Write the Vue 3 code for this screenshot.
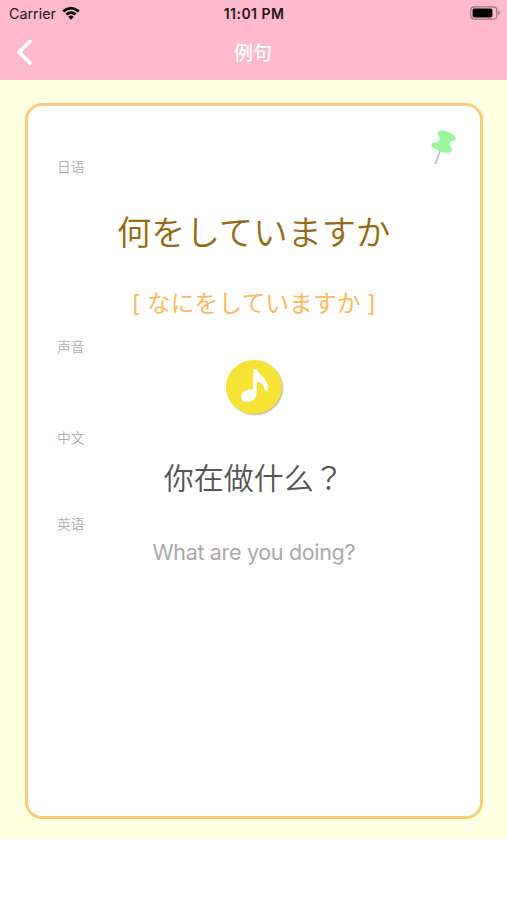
<script setup>
const sentence = {
  japanese: '何をしていますか',
  reading: '[ なにをしていますか ]',
  chinese: '你在做什么',
  english: 'What are you doing?',
}
</script>

<template>
  <div class="screen">
    <header class="header">
      <div class="status">
        <div class="carrier">
          <span>Carrier</span>
          <svg class="wifi" viewBox="0 0 18 14" width="18" height="14">
            <path d="M.3 4.3Q9-2.9 17.7 4.3L15.8 6.4Q9 .8 2.2 6.4Z" />
            <path d="M3.5 7.5Q9 2.9 14.5 7.5L12.7 9.5Q9 6.4 5.3 9.5Z" />
            <path d="M6.3 10.7Q9 8.5 11.7 10.7L9 13.7Z" />
          </svg>
        </div>
        <span class="time">11:01 PM</span>
        <svg class="battery" viewBox="0 0 31 14" width="31" height="14">
          <rect x=".8" y=".8" width="26" height="12.4" rx="3.5" fill="none" stroke="#a07580" stroke-width="1.2" />
          <rect x="2.6" y="2.5" width="19.8" height="9" rx="1.7" />
          <path d="M28.3 4.8Q32 7 28.3 9.2Z" fill="#a07580" />
        </svg>
      </div>
      <nav class="nav">
        <svg class="back" viewBox="0 0 18 28" width="18" height="28">
          <path d="M15 3.3L4 14.2L15 25" fill="none" stroke="#fff" stroke-width="3.6" stroke-linecap="round" />
        </svg>
        <h1>例句</h1>
        <span></span>
      </nav>
    </header>
    <main class="page">
      <article class="card">
        <svg class="pin" viewBox="0 0 28 36" width="28" height="36">
          <path d="M10.2 21L5.2 33.8" fill="none" stroke="#c4c4c4" stroke-width="2" />
          <path
            d="M7.9 2.3C8.6-.1 17 .6 21.4 3.5C25 5.6 26.6 8.5 25.4 9.9C23.8 11.4 21.8 10.2 20.8 11.4C19.6 12.7 19 14.2 19.8 15.3C21.2 16.9 23 18.6 21.7 21C20.2 23.8 13.4 23.2 8.3 20.5C3.8 18.3.4 16.3 1.7 13.7C2.7 11.8 5.5 13 7.6 11.9C9.3 10.8 10 8.6 9.4 7.1C8.9 5.6 7.3 4.8 7.9 2.3Z"
            fill="#98f79d" />
        </svg>
        <section class="block japanese">
          <h2>日语</h2>
          <p class="sentence">{{ sentence.japanese }}</p>
          <p class="reading">{{ sentence.reading }}</p>
        </section>
        <section class="block sound">
          <h2>声音</h2>
          <button class="play" aria-label="声音">
            <svg viewBox="0 0 56 54" width="56" height="54">
              <path
                d="M27.4 9.8Q28.5 8.4 31 9.4C32.4 14.2 39.6 17.2 41.5 24.3Q42.8 30.6 40.6 31Q38.5 31 38 27.2C37.3 23.7 33.6 21.8 31.2 21.5L30.5 33.8C30.2 40.2 22.8 43.4 18.1 41.4C13.9 39.4 14.3 33.8 18.5 31.1C21.3 29.2 24.6 28.9 26.8 30.1Z"
                fill="#fff" />
            </svg>
          </button>
        </section>
        <section class="block chinese">
          <h2>中文</h2>
          <p class="translation">{{ sentence.chinese }}<span class="mark">？</span></p>
        </section>
        <section class="block">
          <h2>英语</h2>
          <p class="english">{{ sentence.english }}</p>
        </section>
      </article>
    </main>
  </div>
</template>

<style>
body {
  background: #fff;
}
</style>

<style scoped>
.screen {
  width: 507px;
  height: 900px;
  overflow: hidden;
  background: #fff;
  font-family: Inter, "Noto Sans CJK SC", sans-serif;
}
.header {
  box-sizing: border-box;
  height: 80px;
  background: #feb9cc;
  border-bottom: 1px solid #f3c5bf;
}
.status {
  display: grid;
  grid-template-columns: 1fr auto 1fr;
  align-items: center;
  height: 27px;
  padding: 0 6px 0 9px;
  font-size: 14.3px;
  line-height: 27px;
  color: #21171a;
}
.carrier {
  display: flex;
  align-items: center;
  gap: 6px;
  margin-top: -1px;
}
.wifi {
  margin-top: -1px;
}
.time {
  font-weight: 600;
  font-size: 14px;
  letter-spacing: 0.45px;
  margin-right: 2px;
  margin-top: -1px;
}
.battery {
  justify-self: end;
  margin-top: -1px;
}
.nav {
  display: grid;
  grid-template-columns: 1fr auto 1fr;
  align-items: center;
  height: 50px;
  padding: 0 16px 0 15px;
}
h1 {
  margin: 3px 0 0;
  font-size: 19px;
  line-height: 28px;
  font-weight: 500;
  color: #fff;
}
.page {
  box-sizing: border-box;
  height: 759px;
  padding: 22.5px 24.5px 21.5px 25px;
  background: #ffffe1;
}
.card {
  position: relative;
  box-sizing: border-box;
  height: 716px;
  padding: 50px 29px 0;
  background: #fff;
  border: 3px solid #fbca7a;
  border-radius: 17px;
}
.pin {
  position: absolute;
  top: 24px;
  right: 22px;
}
.block h2 {
  margin: 0;
  height: 22px;
  font-size: 13.7px;
  line-height: 22px;
  font-weight: 350;
  color: #aeaeae;
}
.block p {
  margin: 0;
  text-align: center;
  white-space: nowrap;
}
.japanese {
  height: 180px;
}
.sound {
  height: 91px;
}
.chinese {
  height: 86px;
}
.block .sentence {
  margin-top: 27px;
  font-family: "Noto Sans CJK JP", sans-serif;
  font-size: 34.3px;
  line-height: 50px;
  font-weight: 350;
  color: #966a10;
}
.block .reading {
  margin-top: 31px;
  font-family: Inter, "Noto Sans CJK JP", sans-serif;
  font-size: 23.8px;
  line-height: 36px;
  font-weight: 400;
  color: #fdb85b;
}
.play {
  display: block;
  width: 56px;
  height: 54px;
  margin: 2px auto 0;
  padding: 0;
  border: 0;
  border-radius: 50%;
  background: #f5e335;
  box-shadow: 1px 1px 1.5px rgba(70, 65, 20, 0.4);
}
.play svg {
  display: block;
}
.block .translation {
  margin-top: 5px;
  font-size: 30px;
  line-height: 44px;
  font-weight: 350;
  color: #555;
}
.mark {
  font-family: "Noto Sans CJK TC", sans-serif;
}
.block .english {
  margin-top: 2px;
  font-size: 21.5px;
  line-height: 30px;
  letter-spacing: -0.33px;
  color: #a9a9a9;
}
</style>
